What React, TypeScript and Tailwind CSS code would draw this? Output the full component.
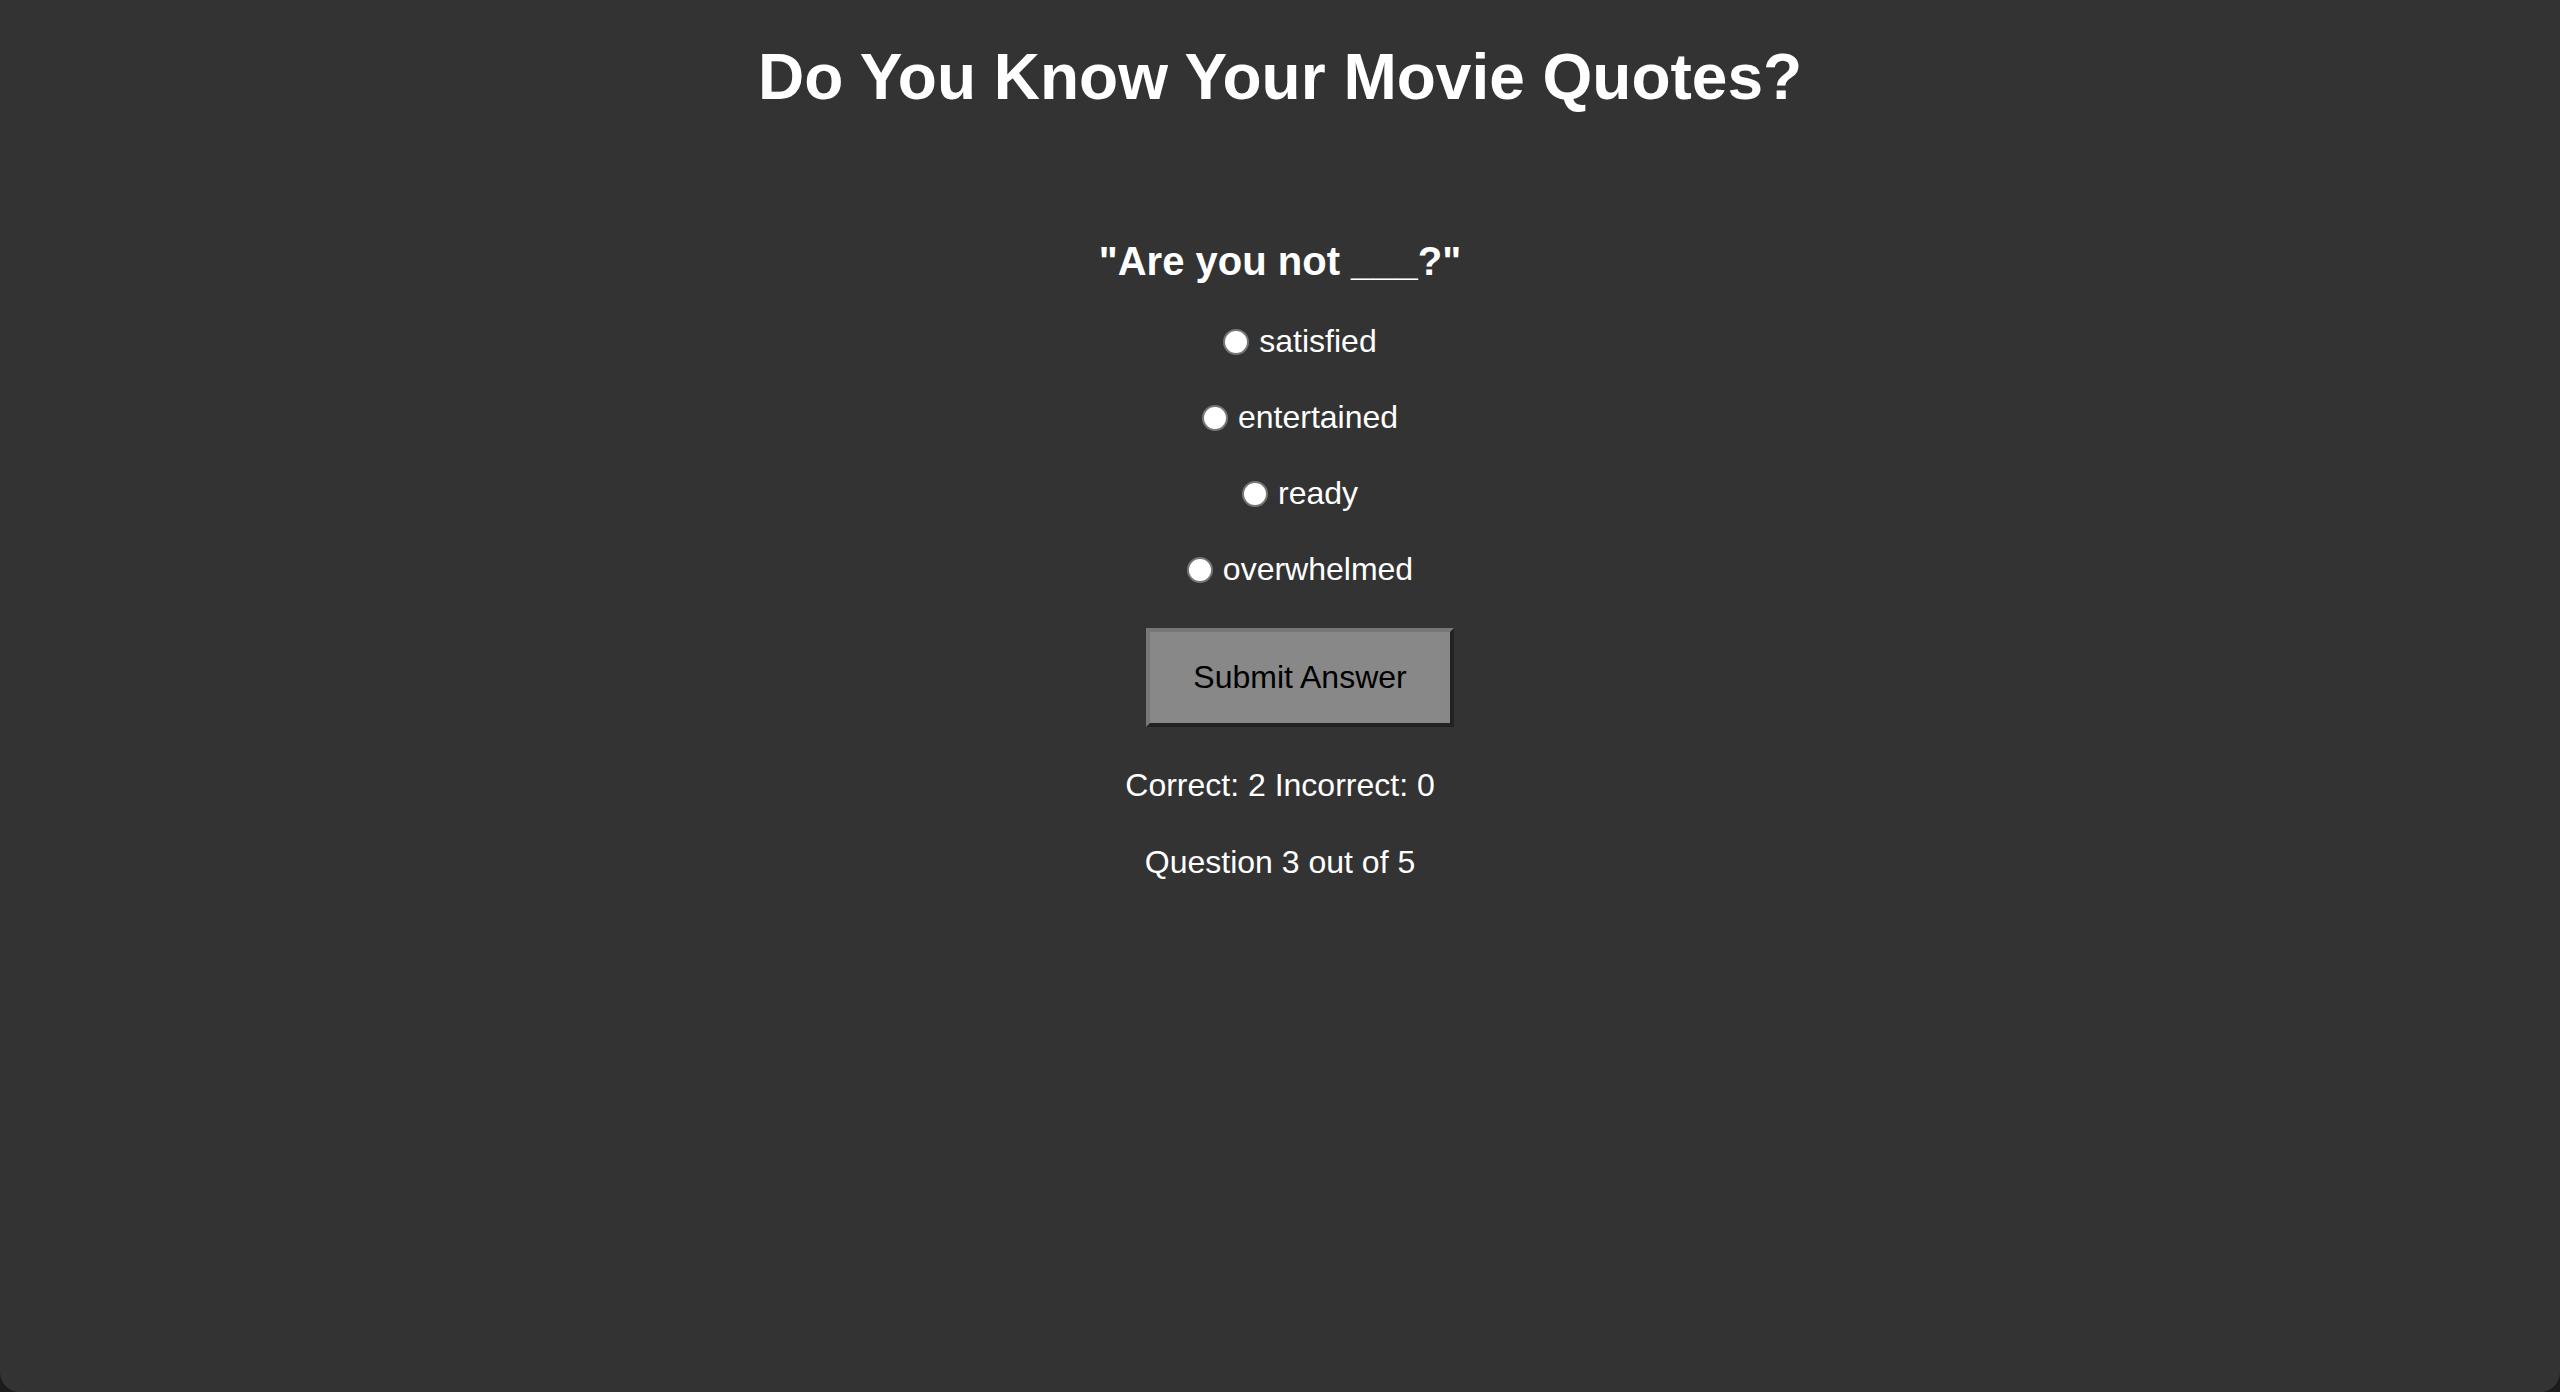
import { useState } from "react";

const OPTIONS = ["satisfied", "entertained", "ready", "overwhelmed"];

export default function App() {
  const [choice, setChoice] = useState<string | null>(null);

  return (
    <div className="h-screen w-full bg-[#1c1c1a] font-['Liberation_Sans',Arial,sans-serif] text-white">
      <div className="flex h-full flex-col items-center rounded-b-[20px] bg-[#333333] pt-[40px]">
        <h1 className="text-[64px] font-bold leading-[74px]">Do You Know Your Movie Quotes?</h1>

        <h3 className="mt-[124px] text-[40px] font-bold leading-[46px]">"Are you not ___?"</h3>

        <div className="mt-[39px] flex flex-col items-center gap-[39px] pl-10">
          {OPTIONS.map((opt) => (
            <label key={opt} className="flex cursor-pointer items-center gap-[10px] text-[32px] leading-[37px]">
              <input
                type="radio"
                name="quote"
                checked={choice === opt}
                onChange={() => setChoice(opt)}
                className="m-0 h-[26px] w-[26px] appearance-none rounded-full border-2 border-[#777777] bg-white checked:border-[8px] checked:border-[#1a73e8]"
              />
              {opt}
            </label>
          ))}
        </div>

        <div className="mt-[40px] pl-10">
          <button className="h-[99px] w-[308px] border-4 border-t-[#777777] border-l-[#777777] border-r-[#222222] border-b-[#222222] bg-[#888888] text-[32px] leading-[37px] text-black">
            Submit Answer
          </button>
        </div>

        <p className="mt-[40px] text-[32px] leading-[37px]">Correct: 2 Incorrect: 0</p>
        <p className="mt-[40px] text-[32px] leading-[37px]">Question 3 out of 5</p>
      </div>
    </div>
  );
}
